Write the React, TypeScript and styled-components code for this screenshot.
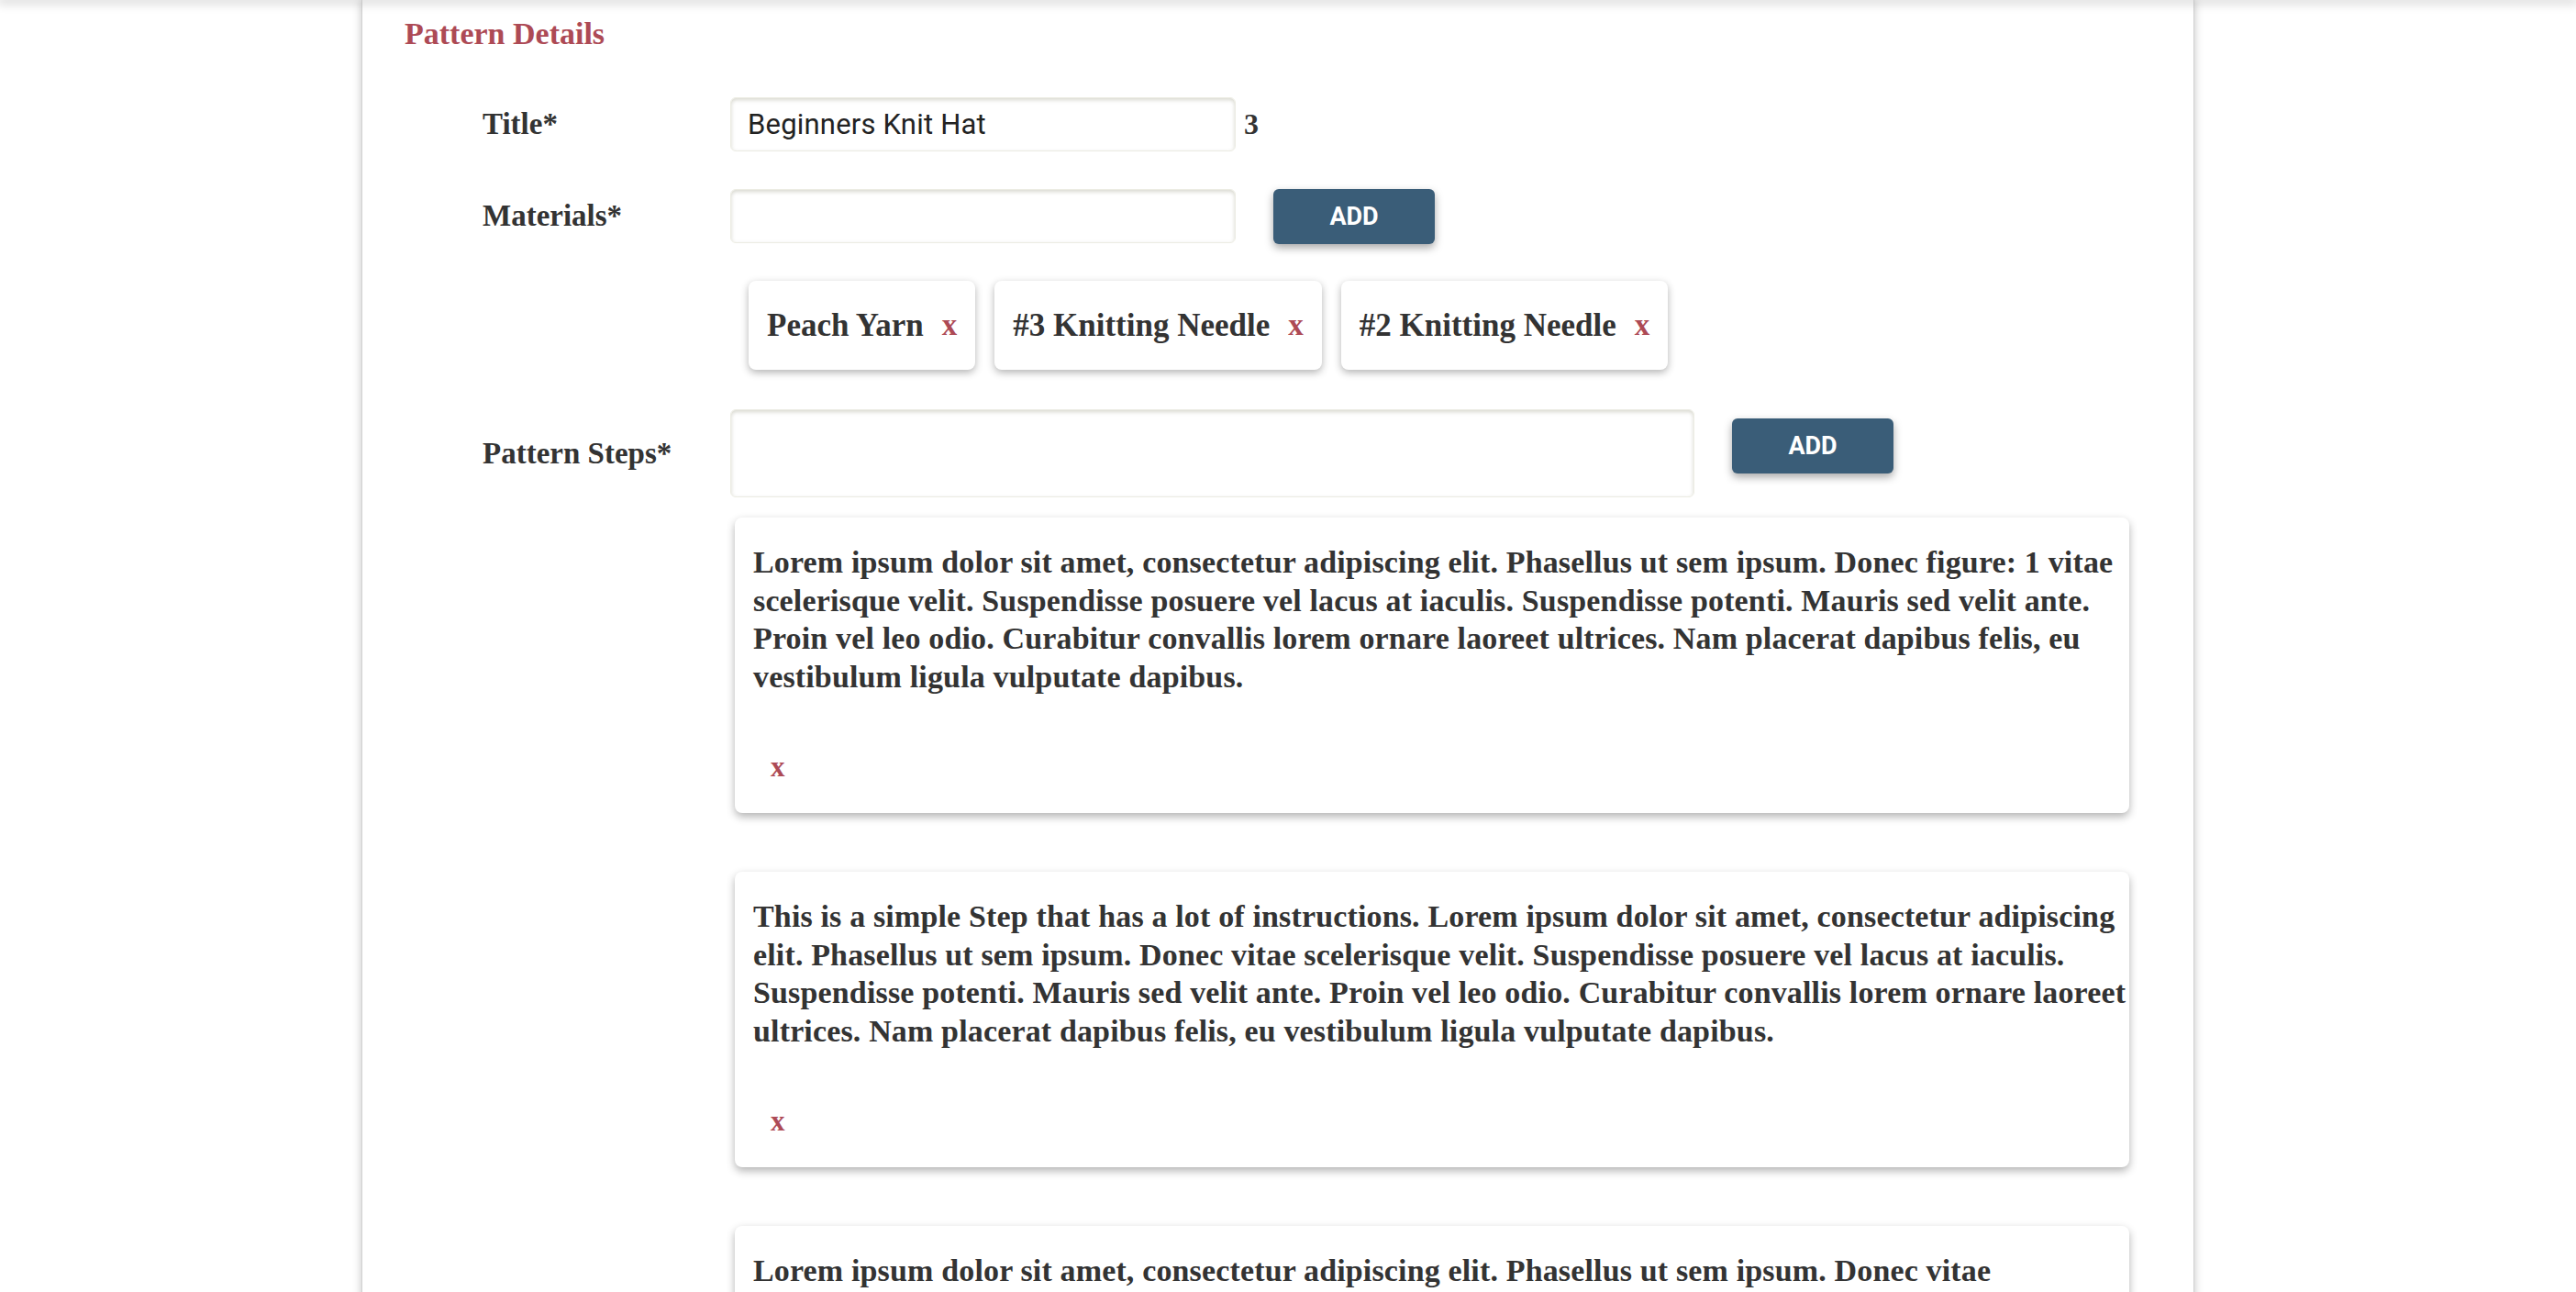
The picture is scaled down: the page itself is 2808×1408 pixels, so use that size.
import React from "react";
import styled, { createGlobalStyle } from "styled-components";

const GlobalStyle = createGlobalStyle`
  html, body {
    margin: 0;
    padding: 0;
    background: #ffffff;
    overflow: hidden;
  }
  body {
    font-family: "Liberation Serif", "Times New Roman", serif;
    color: #333333;
  }
  * { box-sizing: border-box; }
`;

const TopShade = styled.div`
  position: fixed;
  top: 0;
  left: 0;
  right: 0;
  height: 0;
  box-shadow: 0 0 12px 3px rgba(0, 0, 0, 0.22);
  z-index: 5;
`;

const Page = styled.div`
  min-height: 100vh;
  padding-left: 395px;
`;

const Panel = styled.main`
  width: 1996px;
  min-height: 100vh;
  background: #ffffff;
  box-shadow: 0 0 10px rgba(0, 0, 0, 0.28), 0 0 1px rgba(0, 0, 0, 0.35);
  padding: 0 0 80px 46px;
`;

const Heading = styled.h2`
  margin: 0;
  padding-top: 19px;
  font-size: 34px;
  line-height: 36px;
  font-weight: 700;
  color: #ad4a55;
`;

const Form = styled.form`
  padding-left: 85px;
`;

const FieldRow = styled.div<{ $mt: number }>`
  display: grid;
  grid-template-columns: 270px auto;
  align-items: center;
  margin-top: ${(p) => p.$mt}px;
`;

const Label = styled.label`
  font-size: 33px;
  font-weight: 700;
  color: #333333;
`;

const Controls = styled.div`
  display: flex;
  align-items: center;
`;

const fieldBox = `
  border: 1px solid #ecece3;
  border-radius: 6px;
  background: #ffffff;
  box-shadow: inset 0 2px 4px rgba(110, 110, 80, 0.28);
  font-family: Roboto, "Liberation Sans", sans-serif;
  font-size: 31px;
  letter-spacing: 0.2px;
  color: #222222;
  padding: 0 18px;
  outline: none;
`;

const TextInput = styled.input`
  ${fieldBox}
  width: 551px;
  height: 59px;
`;

const StepInput = styled.textarea`
  ${fieldBox}
  width: 1051px;
  height: 96px;
  resize: none;
  padding-top: 14px;
`;

const Counter = styled.span`
  margin-left: 9px;
  font-size: 32px;
  font-weight: 700;
  color: #333333;
`;

const AddButton = styled.button<{ $offset: number }>`
  align-self: flex-start;
  margin-top: ${(p) => p.$offset}px;
  margin-left: 41px;
  width: 176px;
  height: 60px;
  border: none;
  border-radius: 6px;
  background: #3a5d78;
  color: #ffffff;
  font-family: Roboto, "Liberation Sans", sans-serif;
  font-weight: 700;
  font-size: 27px;
  box-shadow: 0 4px 10px rgba(0, 0, 0, 0.35);
  cursor: pointer;
`;

const ChipList = styled.ul`
  list-style: none;
  margin: 40px 0 0 290px;
  padding: 0;
  display: flex;
  gap: 21px;
`;

const Chip = styled.li`
  display: flex;
  align-items: center;
  gap: 20px;
  height: 97px;
  padding: 0 20px;
  border-radius: 8px;
  background: #ffffff;
  box-shadow: 0 3px 9px rgba(0, 0, 0, 0.3);
  font-size: 35px;
  font-weight: 700;
  color: #333333;
`;

const RemoveButton = styled.button<{ $size: number; $indent?: number }>`
  border: none;
  background: none;
  padding: 0;
  margin-left: ${(p) => p.$indent ?? 0}px;
  font-family: "Liberation Serif", "Times New Roman", serif;
  font-weight: 700;
  font-size: ${(p) => p.$size}px;
  line-height: 41.6px;
  color: #ad4a55;
  cursor: pointer;
`;

const StepList = styled.div`
  margin: 22px 0 0 275px;
  width: 1520px;
  display: flex;
  flex-direction: column;
  gap: 64px;
`;

const StepCard = styled.article`
  background: #ffffff;
  border-radius: 8px;
  box-shadow: 0 4px 10px rgba(0, 0, 0, 0.3);
  padding: 28px 0 29px 20px;
`;

const StepText = styled.p`
  margin: 0 -14px 57px 0;
  font-size: 34px;
  letter-spacing: 0.15px;
  line-height: 41.6px;
  font-weight: 700;
  color: #333333;
`;

const materials = ["Peach Yarn", "#3 Knitting Needle", "#2 Knitting Needle"];

const steps = [
  "Lorem ipsum dolor sit amet, consectetur adipiscing elit. Phasellus ut sem ipsum. Donec figure: 1 vitae scelerisque velit. Suspendisse posuere vel lacus at iaculis. Suspendisse potenti. Mauris sed velit ante. Proin vel leo odio. Curabitur convallis lorem ornare laoreet ultrices. Nam placerat dapibus felis, eu vestibulum ligula vulputate dapibus.",
  "This is a simple Step that has a lot of instructions. Lorem ipsum dolor sit amet, consectetur adipiscing elit. Phasellus ut sem ipsum. Donec vitae scelerisque velit. Suspendisse posuere vel lacus at iaculis. Suspendisse potenti. Mauris sed velit ante. Proin vel leo odio. Curabitur convallis lorem ornare laoreet ultrices. Nam placerat dapibus felis, eu vestibulum ligula vulputate dapibus.",
  "Lorem ipsum dolor sit amet, consectetur adipiscing elit. Phasellus ut sem ipsum. Donec vitae scelerisque velit. Suspendisse posuere vel lacus at iaculis. Suspendisse potenti. Mauris sed velit ante. Proin vel leo odio. Curabitur convallis lorem ornare laoreet ultrices. Nam placerat dapibus felis, eu vestibulum ligula vulputate dapibus.",
];

export default function App() {
  return (
    <>
      <GlobalStyle />
      <TopShade />
      <Page>
        <Panel>
          <Heading>Pattern Details</Heading>
          <Form onSubmit={(e) => e.preventDefault()}>
            <FieldRow $mt={51}>
              <Label>Title*</Label>
              <Controls>
                <TextInput defaultValue="Beginners Knit Hat" />
                <Counter>3</Counter>
              </Controls>
            </FieldRow>
            <FieldRow $mt={39}>
              <Label>Materials*</Label>
              <Controls>
                <TextInput />
                <AddButton type="button" $offset={2}>ADD</AddButton>
              </Controls>
            </FieldRow>
            <ChipList>
              {materials.map((m) => (
                <Chip key={m}>
                  {m}
                  <RemoveButton type="button" $size={33}>x</RemoveButton>
                </Chip>
              ))}
            </ChipList>
            <FieldRow $mt={43}>
              <Label>Pattern Steps*</Label>
              <Controls>
                <StepInput />
                <AddButton type="button" $offset={10}>ADD</AddButton>
              </Controls>
            </FieldRow>
            <StepList>
              {steps.map((s, i) => (
                <StepCard key={i}>
                  <StepText>{s}</StepText>
                  <RemoveButton type="button" $size={31} $indent={19}>
                    x
                  </RemoveButton>
                </StepCard>
              ))}
            </StepList>
          </Form>
        </Panel>
      </Page>
    </>
  );
}
